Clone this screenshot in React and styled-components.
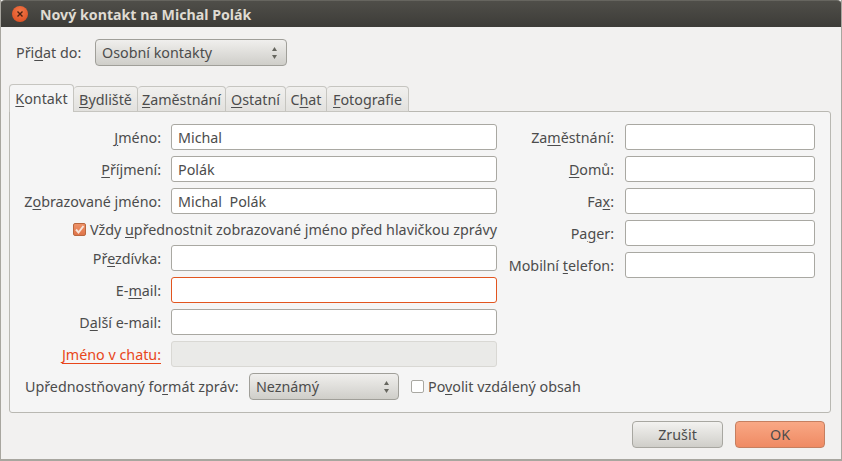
import React from 'react';
import styled, { createGlobalStyle } from 'styled-components';

const Global = createGlobalStyle`
  html, body { margin: 0; padding: 0; background: #f2f1f0; }
  * { box-sizing: border-box; }
`;

const Window = styled.div`
  width: 842px;
  height: 461px;
  display: flex;
  flex-direction: column;
  background: #f2f1f0;
  border-left: 1px solid #a8a69f;
  border-right: 1px solid #a8a69f;
  border-bottom: 2px solid #a8a69f;
  font-family: "Noto Sans", sans-serif;
  font-size: 14.3px;
  color: #4c4c4c;
  overflow: hidden;
`;

const TitleBar = styled.div`
  height: 27px;
  margin: 0 -1px;
  flex: none;
  display: flex;
  align-items: center;
  gap: 12px;
  padding: 0 0 0 12px;
  background: linear-gradient(#4f4e49, #3d3c38);
  border-top: 1px solid #66655f;
  border-radius: 5px 5px 0 0;
  color: #dfdbd2;
  font-weight: 700;
  font-size: 14.2px;
`;

const CloseButton = styled.div`
  width: 16px;
  height: 16px;
  border-radius: 50%;
  background: radial-gradient(circle at 50% 35%, #f2794a, #d9481c);
  display: flex;
  align-items: center;
  justify-content: center;
`;

const Body = styled.div`
  flex: 1;
  display: flex;
  flex-direction: column;
  padding: 12px 10px 0 8px;
`;

const TopRow = styled.div`
  display: flex;
  align-items: center;
  padding-left: 7px;
  height: 27px;
`;

const TopLabel = styled.span`
  width: 79px;
  flex: none;
`;

const Combo = styled.div`
  width: ${p => p.$width}px;
  height: 27px;
  flex: none;
  display: flex;
  align-items: center;
  justify-content: space-between;
  padding: 0 9px 0 6px;
  border: 1px solid #a09f99;
  border-radius: 4px;
  background: linear-gradient(#f0efed, #cfcec9);
`;

const Tabs = styled.div`
  display: flex;
  align-items: flex-end;
  margin-top: 18px;
  height: 28px;
  position: relative;
  z-index: 1;
`;

const Tab = styled.div`
  width: ${p => p.$width}px;
  height: ${p => (p.$active ? 28 : 26)}px;
  display: flex;
  align-items: center;
  justify-content: center;
  border: 1px solid #c6c5c0;
  border-left-width: ${p => (p.$active ? 1 : 0)}px;
  border-bottom: ${p => (p.$active ? 'none' : '1px solid #c6c5c0')};
  border-radius: 4px 4px 0 0;
  background: ${p => (p.$active ? '#f5f5f5' : 'linear-gradient(#f1f0ee, #e2e1de)')};
  white-space: nowrap;
`;

const Panel = styled.div`
  height: 302px;
  width: 822px;
  margin-top: -1px;
  border: 1px solid #b9b8b2;
  border-radius: 0 3px 3px 3px;
  background: #f5f5f5;
  padding: 12px 15px 0 15px;
`;

const Columns = styled.div`
  display: flex;
  gap: 11px;
`;

const LeftForm = styled.div`
  display: grid;
  grid-template-columns: 136px 326px;
  column-gap: 10px;
  row-gap: 6px;
  align-items: center;
`;

const RightForm = styled.div`
  display: grid;
  grid-template-columns: 106px 190px;
  column-gap: 11px;
  row-gap: 6px;
  align-items: center;
  align-self: flex-start;
`;

const Label = styled.label`
  text-align: right;
  white-space: nowrap;
  justify-self: end;
  color: ${p => (p.$link ? '#e8461a' : 'inherit')};
  text-decoration: ${p => (p.$link ? 'underline' : 'none')};
  text-decoration-thickness: 1px;
  text-underline-offset: 3px;
`;

const Input = styled.input`
  height: 26px;
  width: 100%;
  padding: 0 6px;
  font: inherit;
  color: inherit;
  background: ${p => (p.disabled ? '#eaeae8' : '#fff')};
  border: 1px solid ${p => (p.$focused ? '#e2551f' : p.disabled ? '#d9d8d4' : '#a9a8a2')};
  border-radius: 3px;
  outline: none;
`;

const CheckRow = styled.div`
  grid-column: 1 / 3;
  display: flex;
  align-items: center;
  justify-content: flex-end;
  gap: 4px;
  height: 19px;
  white-space: nowrap;
`;

const CheckBox = styled.span`
  width: 13px;
  height: 13px;
  flex: none;
  border-radius: 2px;
  border: 1px solid ${p => (p.$checked ? '#b9673f' : '#a9a8a2')};
  background: ${p => (p.$checked ? 'linear-gradient(#ee9268, #df7449)' : '#fff')};
  display: flex;
  align-items: center;
  justify-content: center;
`;

const FormatRow = styled.div`
  display: flex;
  align-items: center;
  height: 27px;
  margin-top: 6px;
  white-space: nowrap;
`;

const FormatLabel = styled.span`
  width: 213px;
  flex: none;
  margin-right: 11px;
`;

const RemoteOption = styled.div`
  display: flex;
  align-items: center;
  gap: 4px;
  margin-left: 12px;
`;

const Footer = styled.div`
  display: flex;
  justify-content: flex-end;
  gap: 12px;
  margin-top: 8px;
  padding-right: 6px;
`;

const Button = styled.button`
  width: ${p => p.$width}px;
  height: 27px;
  padding: 0;
  font: inherit;
  color: inherit;
  border-radius: 4px;
  border: 1px solid ${p => (p.$primary ? '#c57f60' : '#a8a7a1')};
  background: ${p => (p.$primary ? 'linear-gradient(#f9a885, #ef8a63)' : 'linear-gradient(#f3f2f0, #cfcec9)')};
`;

const Key = styled.u`
  text-decoration-thickness: 1px;
  text-underline-offset: 2px;
`;

const Arrows = () => (
  <svg width="5" height="12" viewBox="0 0 5 12">
    <path d="M2.5 0 5 4H0Z M2.5 12 0 8H5Z" fill="#66665f" />
  </svg>
);

const Check = () => (
  <svg width="11" height="11" viewBox="0 0 11 11">
    <path d="M2 5.5 4.5 8.5 9.5 2" fill="none" stroke="#f7e4da" strokeWidth="2" />
  </svg>
);

const leftFields = [
  { label: <><Key>J</Key>méno:</>, value: 'Michal' },
  { label: <><Key>P</Key>říjmení:</>, value: 'Polák' },
  { label: <>Z<Key>o</Key>brazované jméno:</>, value: 'Michal  Polák' },
];

const tabs = [
  { width: 65, active: true, text: <><Key>K</Key>ontakt</> },
  { width: 64, text: <><Key>B</Key>ydliště</> },
  { width: 88, text: <><Key>Z</Key>aměstnání</> },
  { width: 60, text: <><Key>O</Key>statní</> },
  { width: 41, text: <>C<Key>h</Key>at</> },
  { width: 82, text: <><Key>F</Key>otografie</> },
];

const rightFields = [
  <>Za<Key>m</Key>ěstnání:</>,
  <><Key>D</Key>omů:</>,
  <>Fa<Key>x</Key>:</>,
  <>Pa<Key>g</Key>er:</>,
  <>Mobilní <Key>t</Key>elefon:</>,
];

export default function App() {
  return (
    <Window>
      <Global />
      <TitleBar>
        <CloseButton>
          <svg width="8" height="8" viewBox="0 0 8 8">
            <path d="M1.5 1.5 6.5 6.5 M6.5 1.5 1.5 6.5" stroke="#4a2010" strokeWidth="1.4" />
          </svg>
        </CloseButton>
        Nový kontakt na Michal Polák
      </TitleBar>
      <Body>
        <TopRow>
          <TopLabel>Při<Key>d</Key>at do:</TopLabel>
          <Combo $width={192}>Osobní kontakty<Arrows /></Combo>
        </TopRow>
        <Tabs>
          {tabs.map((t, i) => (
            <Tab key={i} $width={t.width} $active={t.active}>{t.text}</Tab>
          ))}
        </Tabs>
        <Panel>
          <Columns>
            <LeftForm>
              {leftFields.map((f, i) => (
                <React.Fragment key={i}>
                  <Label>{f.label}</Label>
                  <Input defaultValue={f.value} />
                </React.Fragment>
              ))}
              <CheckRow>
                <CheckBox $checked><Check /></CheckBox>
                <span>Vždy <Key>u</Key>přednostnit zobrazované jméno před hlavičkou zprávy</span>
              </CheckRow>
              <Label>Př<Key>e</Key>zdívka:</Label>
              <Input />
              <Label>E-<Key>m</Key>ail:</Label>
              <Input $focused />
              <Label>D<Key>a</Key>lší e-mail:</Label>
              <Input />
              <Label $link>Jméno v chatu:</Label>
              <Input disabled />
            </LeftForm>
            <RightForm>
              {rightFields.map((label, i) => (
                <React.Fragment key={i}>
                  <Label>{label}</Label>
                  <Input />
                </React.Fragment>
              ))}
            </RightForm>
          </Columns>
          <FormatRow>
            <FormatLabel>Upřednostňovaný fo<Key>r</Key>mát zpráv:</FormatLabel>
            <Combo $width={150}>Neznámý<Arrows /></Combo>
            <RemoteOption>
              <CheckBox />
              <span>Po<Key>v</Key>olit vzdálený obsah</span>
            </RemoteOption>
          </FormatRow>
        </Panel>
        <Footer>
          <Button $width={91}>Zrušit</Button>
          <Button $width={90} $primary>OK</Button>
        </Footer>
      </Body>
    </Window>
  );
}
